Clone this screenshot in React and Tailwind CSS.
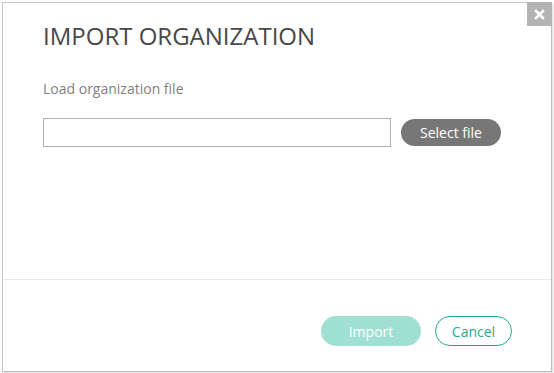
import React from 'react'

export default function App() {
  return (
    <div
      className="w-[554px] h-[373px] bg-white px-[2px] pt-[2px] pb-[1px] overflow-hidden"
      style={{ fontFamily: '"Open Sans", "Liberation Sans", sans-serif' }}
    >
      <div className="relative h-[370px] w-[550px] border border-[#c8c8c8] border-r-[#bdbdbd] border-b-[#bdbdbd] bg-white flex flex-col shadow-[1px_1px_2px_rgba(0,0,0,0.15)]">
        <button className="absolute -top-px -right-px w-[25px] h-[24px] bg-[#b3b3b3] flex items-center justify-center">
          <svg width="11" height="11" viewBox="0 0 11 11">
            <path d="M2 2 L9 9 M9 2 L2 9" stroke="#fff" strokeWidth="2.6" strokeLinecap="square" />
          </svg>
        </button>

        <div className="pl-[40px] pt-[17px]">
          <h2 className="text-[24px] leading-[32px] text-[#484848] font-normal">IMPORT ORGANIZATION</h2>
        </div>

        <div className="pl-[40px] pt-[27px]">
          <p className="text-[14px] leading-[20px] text-[#808080]">Load organization file</p>
          <div className="flex items-center gap-[10px] mt-[19px]">
            <input type="text" className="w-[348px] h-[29px] border border-[#b0b0b0] bg-white outline-none" />
            <button className="w-[100px] h-[27px] rounded-full bg-[#777] text-white text-[14px] leading-none">
              Select file
            </button>
          </div>
        </div>

        <div className="flex-1" />

        <div className="border-t border-[#e8e8e8] h-[92px] flex justify-end items-start gap-[14px] pr-[39px] pt-[36px]">
          <button className="w-[100px] h-[30px] rounded-full bg-[#9fe0d3] text-white text-[14px]">
            Import
          </button>
          <button className="w-[77px] h-[30px] rounded-full border border-[#1aae8f] text-[#1aae8f] text-[14px] bg-white">
            Cancel
          </button>
        </div>
      </div>
    </div>
  )
}
